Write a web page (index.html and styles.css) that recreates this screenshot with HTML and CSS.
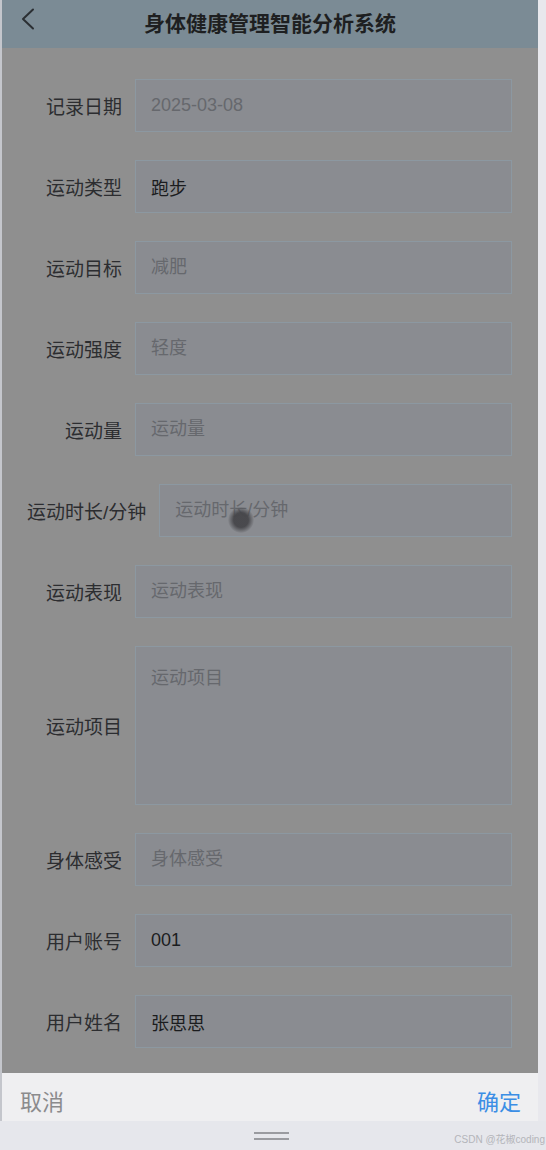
FILE: index.html
```html
<!DOCTYPE html>
<html lang="zh-CN">
<head>
    <meta charset="UTF-8">
    <meta name="viewport" content="width=device-width, initial-scale=1.0">
    <title>身体健康管理智能分析系统</title>
    <link rel="stylesheet" href="styles.css">
</head>
<body>
    <div class="phone">
        <div class="header">
            <span class="back">
                <svg width="16" height="22" viewBox="0 0 16 22"><path d="M13 1.5 L3 11 L13 20.5" fill="none" stroke="#2b2f33" stroke-width="2" stroke-linecap="round" stroke-linejoin="round"/></svg>
            </span>
            <h1>身体健康管理智能分析系统</h1>
        </div>

        <div class="main-content">
            <form class="form">
                <div class="form-row">
                    <label>记录日期</label>
                    <input type="text" placeholder="2025-03-08">
                </div>
                <div class="form-row">
                    <label>运动类型</label>
                    <input type="text" value="跑步">
                </div>
                <div class="form-row">
                    <label>运动目标</label>
                    <input type="text" placeholder="减肥">
                </div>
                <div class="form-row">
                    <label>运动强度</label>
                    <input type="text" placeholder="轻度">
                </div>
                <div class="form-row">
                    <label>运动量</label>
                    <input type="text" placeholder="运动量">
                </div>
                <div class="form-row">
                    <label>运动时长/分钟</label>
                    <input type="text" placeholder="运动时长/分钟">
                </div>
                <div class="form-row">
                    <label>运动表现</label>
                    <input type="text" placeholder="运动表现">
                </div>
                <div class="form-row">
                    <label>运动项目</label>
                    <textarea placeholder="运动项目"></textarea>
                </div>
                <div class="form-row">
                    <label>身体感受</label>
                    <input type="text" placeholder="身体感受">
                </div>
                <div class="form-row">
                    <label>用户账号</label>
                    <input type="text" value="001">
                </div>
                <div class="form-row">
                    <label>用户姓名</label>
                    <input type="text" value="张思思">
                </div>
            </form>
            <div class="touch-dot"></div>
        </div>

        <div class="footer">
            <button class="btn-cancel">取消</button>
            <button class="btn-ok">确定</button>
        </div>
    </div>

    <div class="home-bar">
        <span class="handle"></span>
        <span class="watermark">CSDN @花椒coding</span>
    </div>
</body>
</html>
```

FILE: styles.css
```css
* {
    margin: 0;
    padding: 0;
    box-sizing: border-box;
}

body {
    font-family: "Liberation Sans", "Noto Sans CJK SC", sans-serif;
    background: #e8e8ed;
    width: 546px;
    height: 1150px;
    overflow: hidden;
}

.phone {
    width: 538px;
    border-left: 2px solid #c4c6cc;
}

.header {
    height: 48px;
    background: #7b8b95;
    display: flex;
    align-items: center;
    justify-content: center;
    position: relative;
    padding-bottom: 4px;
}

.back {
    position: absolute;
    left: 18px;
    top: 8px;
}

.header h1 {
    font-size: 21px;
    font-weight: bold;
    color: #1e1f21;
}

.main-content {
    background: #8f8f8f;
    padding: 31px 26px 25px 25px;
    position: relative;
}

.form-row {
    display: flex;
    align-items: center;
    gap: 13px;
    margin-bottom: 28px;
}

.form-row:last-child {
    margin-bottom: 0;
}

label {
    min-width: 95px;
    text-align: right;
    font-size: 19px;
    color: #2c2d30;
    white-space: nowrap;
}

input, textarea {
    flex: 1;
    min-width: 0;
    height: 53px;
    padding: 0 15px;
    background: #8a8c91;
    border: 1px solid #8c98a1;
    border-radius: 0;
    font-family: inherit;
    font-size: 18px;
    color: #1b1c1e;
    outline: none;
}

textarea {
    height: 159px;
    padding: 16px 15px;
    resize: none;
}

input::placeholder, textarea::placeholder {
    color: #66686d;
}

.touch-dot {
    position: absolute;
    left: 226px;
    top: 459px;
    width: 26px;
    height: 26px;
    border-radius: 50%;
    background: radial-gradient(circle, rgba(70,70,74,0.95) 40%, rgba(80,80,84,0) 72%);
}

.footer {
    height: 48px;
    background: #efeff1;
    display: flex;
    align-items: center;
    justify-content: space-between;
    padding: 6px 17px 0 18px;
}

.footer button {
    background: none;
    border: none;
    font-family: inherit;
    font-size: 22px;
    cursor: pointer;
}

.btn-cancel {
    color: #8b8b8d;
}

.btn-ok {
    color: #3b8ee5;
}

.home-bar {
    height: 29px;
    position: relative;
    background: #e6e7ec;
}

.handle {
    position: absolute;
    left: 254px;
    top: 11px;
    width: 35px;
    height: 8px;
    border-top: 2px solid #9a9ba0;
    border-bottom: 2px solid #9a9ba0;
}

.watermark {
    position: absolute;
    right: 1px;
    top: 10px;
    font-size: 10px;
    color: #b4b5ba;
    white-space: nowrap;
}
```
